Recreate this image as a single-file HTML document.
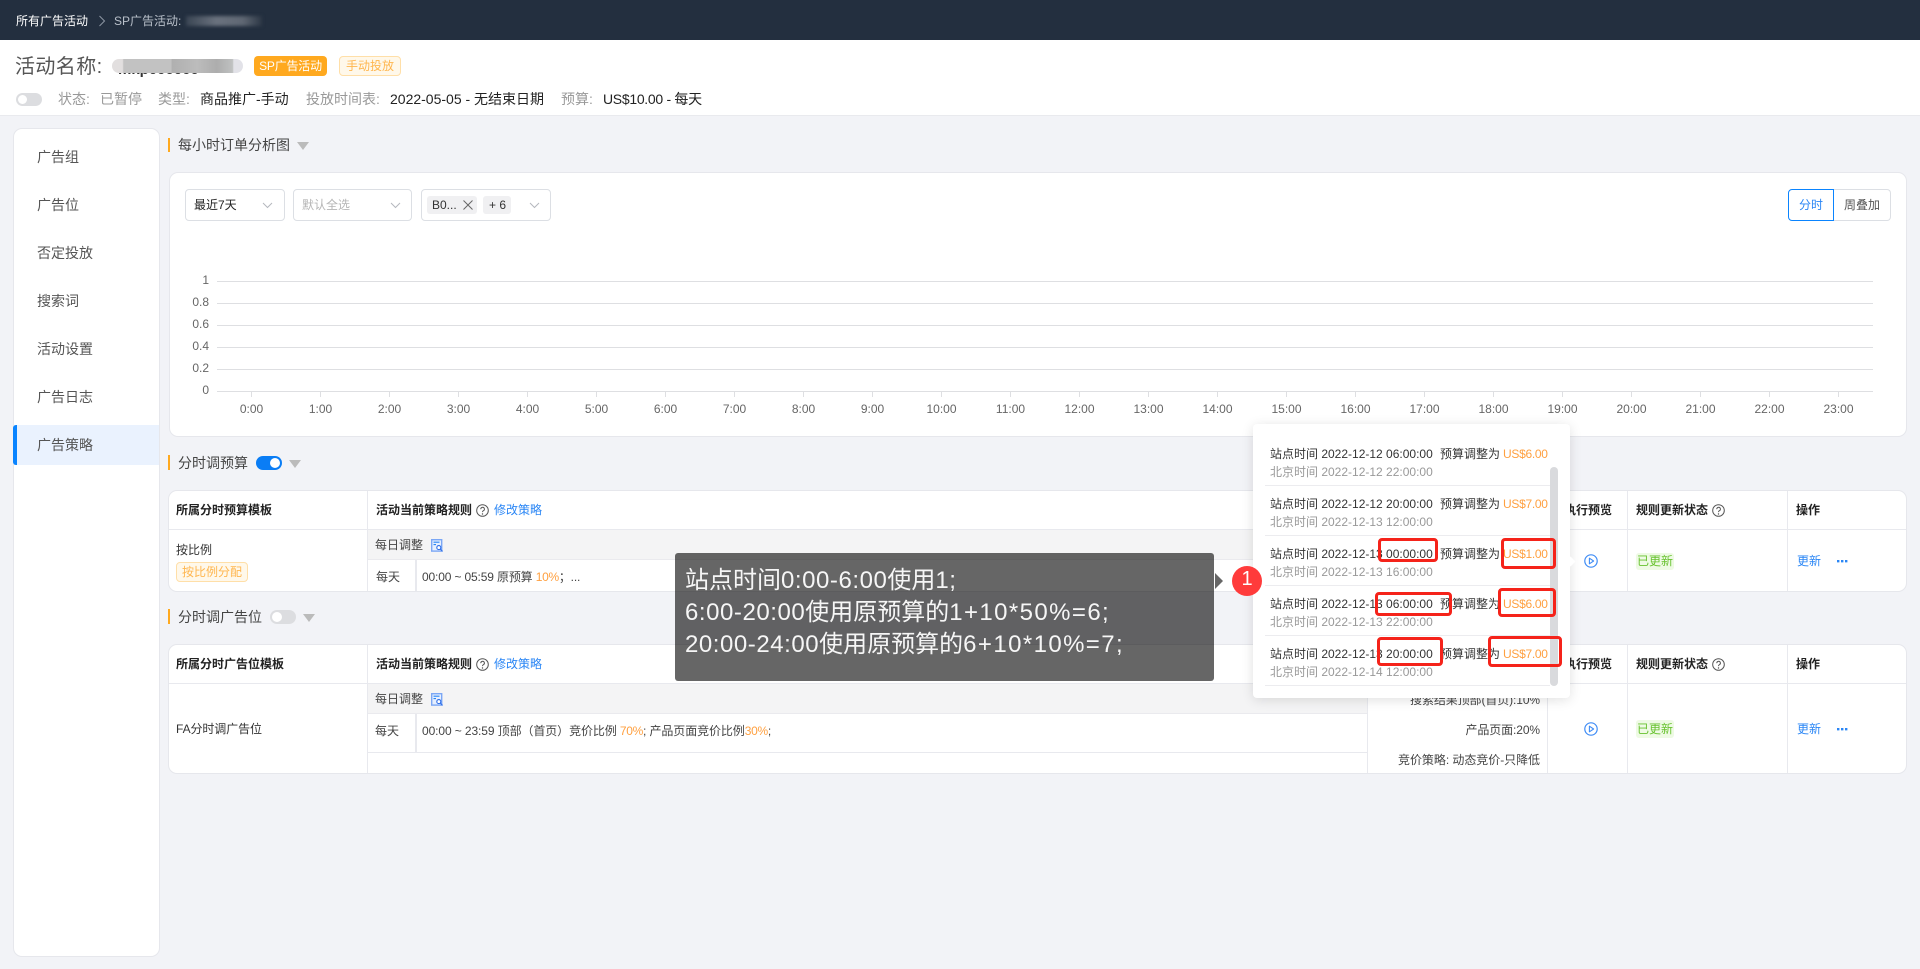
<!DOCTYPE html>
<html lang="zh">
<head>
<meta charset="utf-8">
<title>SP广告活动</title>
<style>
html,body{margin:0;padding:0}
body{width:1920px;height:969px;position:relative;overflow:hidden;background:#f2f3f7;font-family:"Liberation Sans","Noto Sans CJK SC",sans-serif;font-size:12px;color:#333}
.a{position:absolute}
.t{position:absolute;white-space:nowrap;line-height:20px;height:20px}
.b{font-weight:700;color:#222}
.o{color:#ffa040;letter-spacing:-.3px}
.bl{color:#2a86f5}
.g{color:#999}
.card{position:absolute;background:#fff;border:1px solid #e6e7ec;border-radius:9px;box-sizing:border-box}
.bar{position:absolute;left:168px;width:2px;background:#ffa91f}
.tri{position:absolute;width:0;height:0;border-left:6.5px solid transparent;border-right:6.5px solid transparent;border-top:8px solid #bbb}
.sel{position:absolute;top:189px;height:32px;box-sizing:border-box;background:#fff;border:1px solid #dcdfe4;border-radius:4px}
.sec{font-size:14px;color:#444}
.nav{position:absolute;left:37px;font-size:14px;color:#555;line-height:20px;white-space:nowrap}
.line{position:absolute;background:#e8e9ee}
.tog{position:absolute;width:26px;height:14px;border-radius:7px}
.tog i{position:absolute;top:2px;width:10px;height:10px;border-radius:50%;background:#fff}
.red{position:absolute;border:3px solid #f5231a;border-radius:4px;box-sizing:border-box}
.tag{position:absolute;box-sizing:border-box;text-align:center;border-radius:3px}
.row{position:absolute;left:1265px;width:285px;height:1px;background:#ececef}
.big{font-size:24px;line-height:32px;height:32px;color:#f6f6f6}
.l1{letter-spacing:.55px}
.l2{letter-spacing:1.4px}
.s13{font-size:14px}
svg{position:absolute;overflow:visible}
</style>
</head>
<body>
<!-- top bar -->
<div class="a" style="left:0;top:0;width:1920px;height:40px;background:#232f3f"></div>
<div class="t" style="left:16px;top:11px;color:#fff">所有广告活动</div>
<svg style="left:98px;top:15px" width="8" height="12"><path d="M1.5 1 L6.5 6 L1.5 11" fill="none" stroke="#8d96a3" stroke-width="1"/></svg>
<div class="t" style="left:114px;top:11px;color:#b9c0ca">SP广告活动:</div>
<div class="a" style="left:186px;top:16px;width:76px;height:10px;background:linear-gradient(90deg,#3a4553,#6a727e 40%,#5f6773 75%,#2c3745);filter:blur(1.5px)"></div>

<!-- title bar -->
<div class="a" style="left:0;top:40px;width:1920px;height:76px;background:#fff;border-bottom:1px solid #e9eaee;box-sizing:border-box"></div>
<div class="t" style="left:15px;top:55px;font-size:20px;line-height:24px;height:24px;color:#555;letter-spacing:.4px">活动名称:</div>
<div class="t" style="left:118px;top:60px;font-size:15px;font-weight:700;color:#333">mkp000000</div>
<div class="a" style="left:112px;top:59px;width:131px;height:14px;border-radius:7px;background:linear-gradient(90deg,#e2dfdf 0,#e2dfdf 8%,#c2c2c2 9%,#c2c2c2 45%,#b0b0b0 46%,#bcbcbc 65%,#adadad 80%,#bfc1c1 92%,#e2e2e8 93%)"></div>
<div class="tag" style="left:254px;top:56px;width:73px;height:20px;background:#ffa91f;color:#fff;line-height:20px;border-radius:4px;letter-spacing:-.2px">SP广告活动</div>
<div class="tag" style="left:339px;top:56px;width:62px;height:20px;background:#fff8ea;border:1px solid #ffdfa8;color:#ffb64f;line-height:18px;border-radius:4px">手动投放</div>

<div class="tog" style="left:16px;top:93px;height:13px;background:#dcdde0"><i style="left:2px;width:9px;height:9px"></i></div>
<div class="t s13" style="left:58px;top:89px;color:#999">状态:</div>
<div class="t s13" style="left:100px;top:89px;color:#999">已暂停</div>
<div class="t s13" style="left:158px;top:89px;color:#999">类型:</div>
<div class="t s13" style="left:200px;top:89px;color:#222">商品推广-手动</div>
<div class="t s13" style="left:306px;top:89px;color:#999">投放时间表:</div>
<div class="t s13" style="left:390px;top:89px;color:#222">2022-05-05 - 无结束日期</div>
<div class="t s13" style="left:561px;top:89px;color:#999">预算:</div>
<div class="t s13" style="left:603px;top:89px;color:#222;letter-spacing:-.3px">US$10.00 - 每天</div>

<!-- sidebar -->
<div class="card" style="left:13px;top:128px;width:147px;height:829px"></div>
<div class="a" style="left:14px;top:425px;width:145px;height:40px;background:#eaf2fe"></div>
<div class="a" style="left:13px;top:425px;width:4px;height:40px;background:#0a84ff;border-radius:3px 0 0 3px"></div>
<div class="nav" style="top:147px">广告组</div>
<div class="nav" style="top:195px">广告位</div>
<div class="nav" style="top:243px">否定投放</div>
<div class="nav" style="top:291px">搜索词</div>
<div class="nav" style="top:339px">活动设置</div>
<div class="nav" style="top:387px">广告日志</div>
<div class="nav" style="top:435px">广告策略</div>

<!-- section 1 -->
<div class="bar" style="top:138px;height:14px"></div>
<div class="t sec" style="left:178px;top:135px">每小时订单分析图</div>
<div class="tri" style="left:297px;top:142px"></div>

<div class="card" style="left:169px;top:172px;width:1738px;height:265px"></div>
<div class="sel" style="left:185px;width:100px"></div>
<div class="t" style="left:194px;top:195px;color:#222">最近7天</div>
<svg style="left:262px;top:202px" width="11" height="7"><path d="M1 1 L5.5 5.5 L10 1" fill="none" stroke="#b5b8be" stroke-width="1"/></svg>
<div class="sel" style="left:293px;width:119px"></div>
<div class="t" style="left:302px;top:195px;color:#b5b5b5">默认全选</div>
<svg style="left:390px;top:202px" width="11" height="7"><path d="M1 1 L5.5 5.5 L10 1" fill="none" stroke="#b5b8be" stroke-width="1"/></svg>
<div class="sel" style="left:421px;width:130px"></div>
<div class="a" style="left:427px;top:196px;width:50px;height:18px;background:#f0f0f2;border-radius:3px"></div>
<div class="t" style="left:432px;top:195px;color:#333">B0...</div>
<svg style="left:463px;top:200px" width="10" height="10"><path d="M.5 .5 L9.5 9.5 M9.5 .5 L.5 9.5" fill="none" stroke="#666" stroke-width="1"/></svg>
<div class="a" style="left:483px;top:196px;width:28px;height:18px;background:#f0f0f2;border-radius:3px"></div>
<div class="t" style="left:489px;top:195px;color:#333">+ 6</div>
<svg style="left:529px;top:202px" width="11" height="7"><path d="M1 1 L5.5 5.5 L10 1" fill="none" stroke="#b5b8be" stroke-width="1"/></svg>

<div class="a" style="left:1834px;top:189px;width:57px;height:32px;box-sizing:border-box;background:#fff;border:1px solid #dcdfe4;border-left:0;border-radius:0 4px 4px 0"></div>
<div class="a" style="left:1788px;top:189px;width:46px;height:32px;box-sizing:border-box;background:#fff;border:1px solid #0a84ff;border-radius:4px 0 0 4px"></div>
<div class="t" style="left:1799px;top:195px;color:#2a86f5">分时</div>
<div class="t" style="left:1844px;top:195px;color:#555">周叠加</div>

<svg style="left:0;top:0" width="1920" height="969" font-family="Liberation Sans, sans-serif" font-size="12" fill="#666">
<g stroke="#dedfe2" stroke-width="1">
<path d="M217 281.5H1873M217 303.5H1873M217 325.5H1873M217 347.5H1873M217 369.5H1873M217 391.5H1873"/>
<path d="M251.5 392v5M320.5 392v5M389.5 392v5M458.5 392v5M527.5 392v5M596.5 392v5M665.5 392v5M734.5 392v5M803.5 392v5M872.5 392v5M941.5 392v5M1010.5 392v5M1079.5 392v5M1148.5 392v5M1217.5 392v5M1286.5 392v5M1355.5 392v5M1424.5 392v5M1493.5 392v5M1562.5 392v5M1631.5 392v5M1700.5 392v5M1769.5 392v5M1838.5 392v5"/>
</g>
<g text-anchor="end">
<text x="209" y="284">1</text><text x="209" y="306">0.8</text><text x="209" y="328">0.6</text><text x="209" y="350">0.4</text><text x="209" y="372">0.2</text><text x="209" y="394">0</text>
</g>
<g text-anchor="middle">
<text x="251.5" y="413">0:00</text><text x="320.5" y="413">1:00</text><text x="389.5" y="413">2:00</text><text x="458.5" y="413">3:00</text><text x="527.5" y="413">4:00</text><text x="596.5" y="413">5:00</text><text x="665.5" y="413">6:00</text><text x="734.5" y="413">7:00</text><text x="803.5" y="413">8:00</text><text x="872.5" y="413">9:00</text><text x="941.5" y="413">10:00</text><text x="1010.5" y="413">11:00</text><text x="1079.5" y="413">12:00</text><text x="1148.5" y="413">13:00</text><text x="1217.5" y="413">14:00</text><text x="1286.5" y="413">15:00</text><text x="1355.5" y="413">16:00</text><text x="1424.5" y="413">17:00</text><text x="1493.5" y="413">18:00</text><text x="1562.5" y="413">19:00</text><text x="1631.5" y="413">20:00</text><text x="1700.5" y="413">21:00</text><text x="1769.5" y="413">22:00</text><text x="1838.5" y="413">23:00</text>
</g>
</svg>

<!-- section 2 -->
<div class="bar" style="top:455px;height:15px"></div>
<div class="t sec" style="left:178px;top:453px">分时调预算</div>
<div class="tog" style="left:256px;top:456px;background:#0a7df5"><i style="left:14px"></i></div>
<div class="tri" style="left:289px;top:460px"></div>

<div class="card" style="left:168px;top:490px;width:1739px;height:102px"></div>
<div class="line" style="left:169px;top:529px;width:1737px;height:1px"></div>
<div class="line" style="left:367px;top:491px;width:1px;height:100px"></div>
<div class="a" style="left:368px;top:530px;width:1000px;height:30px;background:#f4f4f5;border-bottom:1px solid #eaeaee;box-sizing:border-box"></div>
<div class="line" style="left:415px;top:560px;width:2px;height:31px"></div>
<div class="t b" style="left:176px;top:500px">所属分时预算模板</div>
<div class="t b" style="left:376px;top:500px">活动当前策略规则</div>
<svg style="left:476px;top:504px" width="13" height="13" viewBox="0 0 13 13"><circle cx="6.5" cy="6.5" r="5.8" fill="none" stroke="#555" stroke-width="1"/><path d="M4.8 5.2a1.8 1.8 0 1 1 2.6 1.5c-.6.3-.9.7-.9 1.4" fill="none" stroke="#555" stroke-width="1"/><circle cx="6.5" cy="10" r=".7" fill="#555"/></svg>
<div class="t bl" style="left:494px;top:500px">修改策略</div>
<div class="t" style="left:176px;top:540px">按比例</div>
<div class="tag" style="left:176px;top:562px;width:72px;height:20px;background:#fff8ea;border:1px solid #ffdfa8;color:#ffb64f;line-height:18px;border-radius:4px">按比例分配</div>
<div class="t" style="left:375px;top:535px;color:#444">每日调整</div>
<svg style="left:431px;top:539px" width="12" height="13" viewBox="0 0 12 13"><rect x=".7" y=".7" width="10" height="11.4" fill="#e6effe" stroke="#7ba7f5" stroke-width="1.4"/><path d="M2.5 3.2H8.5M2.5 5.6H5" stroke="#2a86f5" stroke-width="1.1"/><circle cx="7.8" cy="8.6" r="2" fill="#fff" stroke="#2f6fe8" stroke-width="1.1"/><path d="M9.3 10.1L11.6 12.4" stroke="#2f6fe8" stroke-width="1.1"/></svg>
<div class="t" style="left:376px;top:567px;color:#444">每天</div>
<div class="t" style="left:422px;top:567px;color:#444;letter-spacing:-.15px">00:00 ~ 05:59 原预算 <span class="o">10%</span>；...</div>

<!-- section 3 -->
<div class="bar" style="top:609px;height:15px"></div>
<div class="t sec" style="left:178px;top:607px">分时调广告位</div>
<div class="tog" style="left:270px;top:610px;background:#dcdde0"><i style="left:2px"></i></div>
<div class="tri" style="left:303px;top:614px"></div>

<div class="card" style="left:168px;top:644px;width:1739px;height:130px"></div>
<div class="line" style="left:169px;top:683px;width:1737px;height:1px"></div>
<div class="line" style="left:367px;top:645px;width:1px;height:128px"></div>
<div class="line" style="left:1367px;top:684px;width:1px;height:89px"></div>
<div class="line" style="left:1547px;top:645px;width:1px;height:128px"></div>
<div class="line" style="left:1627px;top:645px;width:1px;height:128px"></div>
<div class="line" style="left:1787px;top:645px;width:1px;height:128px"></div>
<div class="a" style="left:368px;top:684px;width:999px;height:30px;background:#f4f4f5;border-bottom:1px solid #eaeaee;box-sizing:border-box"></div>
<div class="line" style="left:415px;top:714px;width:2px;height:38px"></div>
<div class="line" style="left:368px;top:752px;width:999px;height:1px"></div>
<div class="t b" style="left:176px;top:654px">所属分时广告位模板</div>
<div class="t b" style="left:376px;top:654px">活动当前策略规则</div>
<svg style="left:476px;top:658px" width="13" height="13" viewBox="0 0 13 13"><circle cx="6.5" cy="6.5" r="5.8" fill="none" stroke="#555" stroke-width="1"/><path d="M4.8 5.2a1.8 1.8 0 1 1 2.6 1.5c-.6.3-.9.7-.9 1.4" fill="none" stroke="#555" stroke-width="1"/><circle cx="6.5" cy="10" r=".7" fill="#555"/></svg>
<div class="t bl" style="left:494px;top:654px">修改策略</div>
<div class="t" style="left:176px;top:719px;letter-spacing:-.1px">FA分时调广告位</div>
<div class="t" style="left:375px;top:689px;color:#444">每日调整</div>
<svg style="left:431px;top:693px" width="12" height="13" viewBox="0 0 12 13"><rect x=".7" y=".7" width="10" height="11.4" fill="#e6effe" stroke="#7ba7f5" stroke-width="1.4"/><path d="M2.5 3.2H8.5M2.5 5.6H5" stroke="#2a86f5" stroke-width="1.1"/><circle cx="7.8" cy="8.6" r="2" fill="#fff" stroke="#2f6fe8" stroke-width="1.1"/><path d="M9.3 10.1L11.6 12.4" stroke="#2f6fe8" stroke-width="1.1"/></svg>
<div class="t" style="left:375px;top:721px;color:#444">每天</div>
<div class="t" style="left:422px;top:721px;color:#444;letter-spacing:-.1px">00:00 ~ 23:59 顶部（首页）竞价比例 <span class="o">70%</span>; 产品页面竞价比例<span class="o">30%</span>;</div>
<div class="t" style="right:380px;top:690px;color:#444;letter-spacing:-.1px">搜索结果顶部(首页):10%</div>
<div class="t" style="right:380px;top:720px;color:#444;letter-spacing:-.1px">产品页面:20%</div>
<div class="t" style="right:380px;top:750px;color:#444;letter-spacing:-.05px">竞价策略: 动态竞价-只降低</div>

<!-- table 2 right cols -->
<div class="t b" style="left:1564px;top:654px">执行预览</div>
<div class="t b" style="left:1636px;top:654px">规则更新状态</div>
<svg style="left:1712px;top:658px" width="13" height="13" viewBox="0 0 13 13"><circle cx="6.5" cy="6.5" r="5.8" fill="none" stroke="#555" stroke-width="1"/><path d="M4.8 5.2a1.8 1.8 0 1 1 2.6 1.5c-.6.3-.9.7-.9 1.4" fill="none" stroke="#555" stroke-width="1"/><circle cx="6.5" cy="10" r=".7" fill="#555"/></svg>
<div class="t b" style="left:1796px;top:654px">操作</div>
<svg style="left:1584px;top:722px" width="14" height="14" viewBox="0 0 14 14"><circle cx="7" cy="7" r="6.2" fill="none" stroke="#3f8cf5" stroke-width="1.2"/><path d="M5.4 4.2L9.6 7L5.4 9.8Z" fill="none" stroke="#3f8cf5" stroke-width="1.1" stroke-linejoin="round"/></svg>
<div class="tag" style="left:1636px;top:720px;width:38px;height:18px;background:#eefae4;color:#68c22f;line-height:18px">已更新</div>
<div class="t bl" style="left:1797px;top:719px">更新</div>
<svg style="left:1837px;top:728px" width="11" height="3"><path d="M0 0h2.4v2.4H0zM4 0h2.4v2.4H4zM8 0h2.4v2.4H8z" fill="#2a86f5"/></svg>

<!-- table 1 right cols -->
<div class="line" style="left:1627px;top:491px;width:1px;height:100px"></div>
<div class="line" style="left:1787px;top:491px;width:1px;height:100px"></div>
<div class="t b" style="left:1564px;top:500px">执行预览</div>
<div class="t b" style="left:1636px;top:500px">规则更新状态</div>
<svg style="left:1712px;top:504px" width="13" height="13" viewBox="0 0 13 13"><circle cx="6.5" cy="6.5" r="5.8" fill="none" stroke="#555" stroke-width="1"/><path d="M4.8 5.2a1.8 1.8 0 1 1 2.6 1.5c-.6.3-.9.7-.9 1.4" fill="none" stroke="#555" stroke-width="1"/><circle cx="6.5" cy="10" r=".7" fill="#555"/></svg>
<div class="t b" style="left:1796px;top:500px">操作</div>
<svg style="left:1584px;top:554px" width="14" height="14" viewBox="0 0 14 14"><circle cx="7" cy="7" r="6.2" fill="none" stroke="#3f8cf5" stroke-width="1.2"/><path d="M5.4 4.2L9.6 7L5.4 9.8Z" fill="none" stroke="#3f8cf5" stroke-width="1.1" stroke-linejoin="round"/></svg>
<div class="tag" style="left:1636px;top:553px;width:38px;height:17px;background:#eefae4;color:#68c22f;line-height:17px">已更新</div>
<div class="t bl" style="left:1797px;top:551px">更新</div>
<svg style="left:1837px;top:560px" width="11" height="3"><path d="M0 0h2.4v2.4H0zM4 0h2.4v2.4H4zM8 0h2.4v2.4H8z" fill="#2a86f5"/></svg>

<!-- popover -->
<div class="a" style="left:1253px;top:424px;width:317px;height:274px;background:#fff;border-radius:4px;box-shadow:0 2px 12px rgba(0,0,0,.12)"></div>
<div class="a" style="left:1567px;top:558px;width:7px;height:7px;background:#fff;transform:rotate(45deg)"></div>
<div class="a" style="left:1550px;top:467px;width:8px;height:219px;background:#d9dadd;border-radius:4px"></div>
<div class="row" style="top:485px"></div><div class="row" style="top:535px"></div><div class="row" style="top:585px"></div><div class="row" style="top:635px"></div><div class="row" style="top:685px"></div>

<div class="t" style="left:1270px;top:444px">站点时间 2022-12-12 06:00:00</div><div class="t" style="left:1440px;top:444px">预算调整为</div><div class="t o" style="left:1503px;top:444px">US$6.00</div>
<div class="t g" style="left:1270px;top:462px">北京时间 2022-12-12 22:00:00</div>
<div class="t" style="left:1270px;top:494px">站点时间 2022-12-12 20:00:00</div><div class="t" style="left:1440px;top:494px">预算调整为</div><div class="t o" style="left:1503px;top:494px">US$7.00</div>
<div class="t g" style="left:1270px;top:512px">北京时间 2022-12-13 12:00:00</div>
<div class="t" style="left:1270px;top:544px">站点时间 2022-12-13 00:00:00</div><div class="t" style="left:1440px;top:544px">预算调整为</div><div class="t o" style="left:1503px;top:544px">US$1.00</div>
<div class="t g" style="left:1270px;top:562px">北京时间 2022-12-13 16:00:00</div>
<div class="t" style="left:1270px;top:594px">站点时间 2022-12-13 06:00:00</div><div class="t" style="left:1440px;top:594px">预算调整为</div><div class="t o" style="left:1503px;top:594px">US$6.00</div>
<div class="t g" style="left:1270px;top:612px">北京时间 2022-12-13 22:00:00</div>
<div class="t" style="left:1270px;top:644px">站点时间 2022-12-13 20:00:00</div><div class="t" style="left:1440px;top:644px">预算调整为</div><div class="t o" style="left:1503px;top:644px">US$7.00</div>
<div class="t g" style="left:1270px;top:662px">北京时间 2022-12-14 12:00:00</div>

<!-- red boxes -->
<div class="red" style="left:1378px;top:538px;width:60px;height:24px"></div>
<div class="red" style="left:1501px;top:538px;width:55px;height:31px"></div>
<div class="red" style="left:1375px;top:592px;width:77px;height:24px"></div>
<div class="red" style="left:1498px;top:588px;width:58px;height:29px"></div>
<div class="red" style="left:1377px;top:637px;width:66px;height:29px"></div>
<div class="red" style="left:1488px;top:636px;width:74px;height:31px"></div>

<!-- annotation tooltip -->
<div class="a" style="left:675px;top:553px;width:539px;height:128px;background:rgba(0,0,0,.6);border-radius:3px"></div>
<div class="a" style="left:1215px;top:573px;width:0;height:0;border-top:8px solid transparent;border-bottom:8px solid transparent;border-left:8px solid #666"></div>
<div class="t big" style="left:685px;top:565px">站点时间<span class="l1">0:00-6:00</span>使用<span class="l1">1;</span></div>
<div class="t big" style="left:685px;top:597px"><span class="l1">6:00-20:00</span>使用原预算的<span class="l2">1+10*50%=6;</span></div>
<div class="t big" style="left:685px;top:629px"><span class="l1">20:00-24:00</span>使用原预算的<span class="l2">6+10*10%=7;</span></div>
<div class="a" style="left:1232px;top:566px;width:30px;height:30px;border-radius:50%;background:#ff3b3b;color:#fff;font-size:20px;line-height:26px;text-align:center">1</div>
</body>
</html>
